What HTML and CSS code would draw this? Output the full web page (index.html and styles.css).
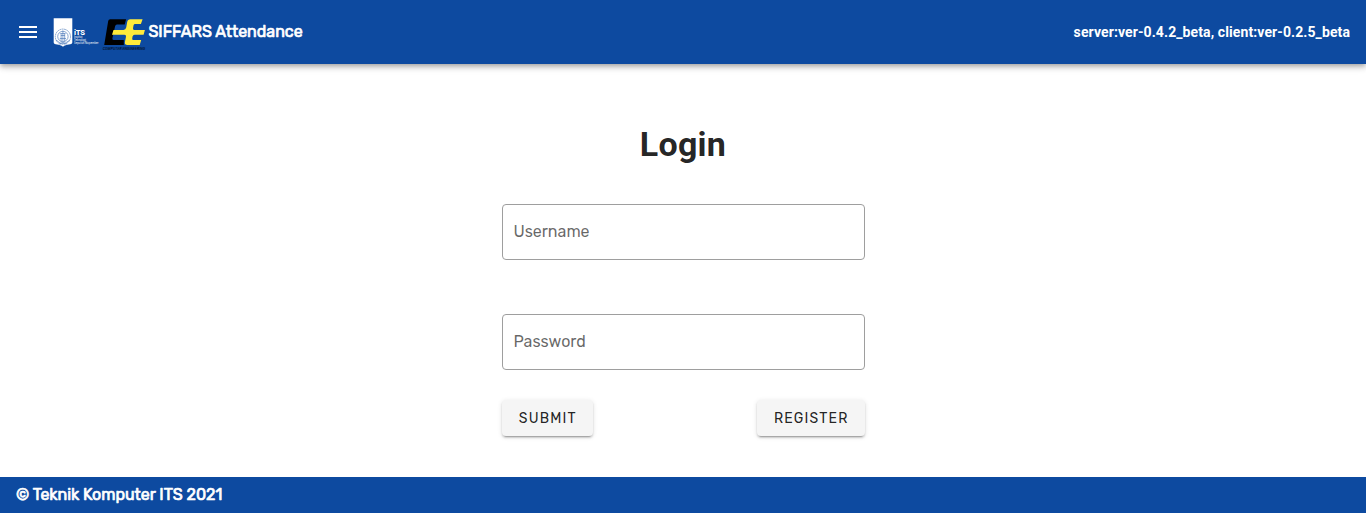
FILE: index.html
```html
<!DOCTYPE html>
<html lang="en">
<head>
<meta charset="utf-8">
<title>SIFFARS Attendance</title>
<link rel="stylesheet" href="styles.css">
</head>
<body>
<header class="app-bar">
  <svg class="menu-icon" viewBox="0 0 24 24" aria-label="Menu"><path d="M3,6H21V8H3V6M3,11H21V13H3V11M3,16H21V18H3V16Z"/></svg>
  <svg class="its-logo" viewBox="0 0 48 32" aria-label="ITS">
    <path fill="#fff" d="M1.7 2.3H20.3V26.5C20.3 29.3 14 27.8 11 30.8C8 27.8 1.7 29.3 1.7 26.5Z"/>
    <g fill="none" stroke="#0d4aa0" stroke-width=".65" opacity=".75">
      <circle cx="10.9" cy="20.7" r="7.6" stroke-dasharray="1.8 .5"/>
      <circle cx="10.9" cy="20.5" r="5.2"/>
      <path d="M8.3 17.5h5.2M8.9 19.5h4M7.8 22.5h6.2M10.9 14.5v11M9.1 17.5v8M12.7 17.5v8M4.1 24.5c2 0 3 3 6.8 3s4.8-3 6.8-3M7.3 28.3l3.6-2 3.6 2"/>
    </g>
    <g fill="#fff" font-family="Roboto, sans-serif">
      <text x="22" y="18.6" font-size="7.6" font-weight="800" textLength="11">iTS</text>
      <g font-size="2.8" opacity=".95">
        <text x="22" y="22" textLength="8.5">Institut</text>
        <text x="22" y="25" textLength="12">Teknologi</text>
        <text x="22" y="28" textLength="24.5">Sepuluh Nopember</text>
      </g>
    </g>
  </svg>
  <svg class="ce-logo" viewBox="0 0 44 34" aria-label="Computer Engineering">
    <path fill="#000" d="M8.2 2.2H24.1L22.7 7.6H15Q13.5 7.6 13.1 9.2L10.4 21.2Q10 23 11.6 23H21.8V27.9H2.2L6.2 4Q6.5 2.2 8.2 2.2Z"/>
    <path fill="#ffeb3b" d="M28.4 2.2H40.6L38.9 7.1H33.2Q31.8 7.1 31.5 8.5L31 11.3Q30.8 12.9 32.2 12.9H42.9L41.6 17.7H32.6Q31 17.7 30.6 19.3L30.2 21.4Q29.9 23 31.5 23H39.2L37.7 27.9H25.5Q22.3 27.9 22.9 24.9L24 19.7Q24.4 17.7 22.4 17.7H10L11.5 12.9H21.4Q23.7 12.9 24.2 10.6L25.2 5Q25.7 2.2 28.4 2.2Z"/>
    <text x=".8" y="33.4" font-family="Roboto, sans-serif" font-size="3.4" font-style="italic" font-weight="500" textLength="42.3" lengthAdjust="spacingAndGlyphs" opacity=".8">COMPUTER ENGINEERING</text>
  </svg>
  <span class="title">SIFFARS Attendance</span>
  <span class="version">server:ver-0.4.2_beta, client:ver-0.2.5_beta</span>
</header>
<main class="content">
  <h1 class="heading">Login</h1>
  <form class="login-form">
    <label class="field"><span class="field-label">Username</span></label>
    <label class="field"><span class="field-label">Password</span></label>
    <div class="actions">
      <button type="button" class="btn submit">SUBMIT</button>
      <button type="button" class="btn register">REGISTER</button>
    </div>
  </form>
</main>
<footer class="footer"><span class="copyright">© Teknik Komputer ITS 2021</span></footer>
</body>
</html>
```

FILE: styles.css
```css
* { box-sizing: border-box; }
body {
  margin: 0;
  height: 513px;
  display: flex;
  flex-direction: column;
  overflow: hidden;
  background: #fff;
  color: rgba(0, 0, 0, .87);
  font-family: Rubik, Roboto, sans-serif;
}
.app-bar {
  flex: 0 0 64px;
  display: flex;
  align-items: center;
  padding: 0 16px;
  background: #0d4aa0;
  color: #fff;
  box-shadow: 0 2px 4px -1px rgba(0, 0, 0, .2), 0 4px 5px 0 rgba(0, 0, 0, .14), 0 1px 10px 0 rgba(0, 0, 0, .12);
}
.menu-icon { width: 24px; height: 24px; fill: #fff; }
.its-logo { width: 48px; height: 32px; margin-left: 12px; }
.ce-logo { width: 44px; height: 34px; margin-left: 2px; margin-top: 4px; overflow: visible; }
.title, .copyright {
  font-size: 16px;
  line-height: 24px;
  font-weight: 400;
  -webkit-text-stroke: .7px #fff;
  white-space: nowrap;
}
.title { margin-left: 2.4px; }
.version { margin-left: auto; font: 700 14px/20px Roboto, sans-serif; letter-spacing: .1px; white-space: nowrap; }
.content { flex: 1; display: flex; flex-direction: column; align-items: center; padding-top: 56px; }
.heading { margin: 0; font: 700 34px/48px Roboto, sans-serif; letter-spacing: .25px; }
.login-form { width: 363px; margin-top: 36px; display: flex; flex-direction: column; }
.field {
  height: 56px;
  display: flex;
  align-items: center;
  padding: 0 11px;
  border: 1px solid #9e9e9e;
  border-radius: 4px;
}
.field + .field { margin-top: 54px; }
.field-label { font-size: 16px; line-height: 20px; color: rgba(0, 0, 0, .6); }
.actions { margin-top: 30px; display: flex; justify-content: space-between; }
.btn {
  height: 36px;
  padding: 2px 0 0 1.5px;
  border: 0;
  border-radius: 4px;
  background: #f5f5f5;
  color: rgba(0, 0, 0, .87);
  font: 400 14px/20px Rubik, Roboto, sans-serif;
  letter-spacing: 1.18px;
  box-shadow: 0 3px 1px -2px rgba(0, 0, 0, .2), 0 2px 2px 0 rgba(0, 0, 0, .14), 0 1px 5px 0 rgba(0, 0, 0, .12);
}
.submit { width: 91px; }
.register { width: 108px; }
.footer { flex: 0 0 36px; padding: 6px 16px; background: #0d4aa0; color: #fff; }
.copyright { display: block; letter-spacing: -.03px; }
```
